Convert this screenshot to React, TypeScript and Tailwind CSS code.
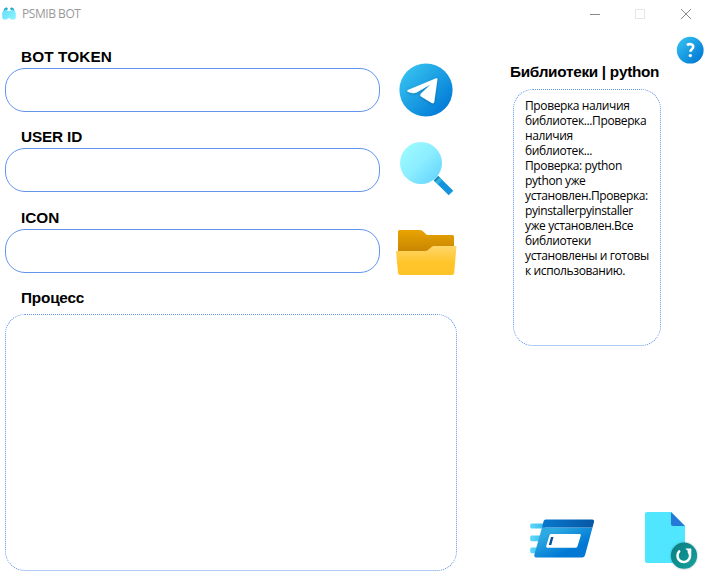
import type { ReactNode } from "react";

function Label({ children, className = "" }: { children: ReactNode; className?: string }) {
  return <div className={`h-[17px] pl-4 text-[15.33px] leading-[17px] font-bold whitespace-nowrap text-black ${className}`}>{children}</div>;
}

function AppLogo() {
  return (
    <svg width="14" height="13" viewBox="0 0 14 13">
      <defs>
        <linearGradient id="logo" x1="0" y1="0" x2="1" y2="1">
          <stop stopColor="#62dcf8" />
          <stop offset="1" stopColor="#8df4ff" />
        </linearGradient>
      </defs>
      <path d="M2.6 1.2 5 3.4 7 4.2l2-.8 2.4-2.2L13.8 6v4.8l-1 1.7H9L8 11.2H6L5 12.5H1.2L.2 10.8V6Z" fill="url(#logo)" />
      <path d="M1.4 4 2.6 1.2 4.6.2 6 1.8 4.8 3.2 3.4 2.6ZM12.6 4l-1.2-2.8-2-1L8 1.8l1.2 1.4 1.4-.6Z" fill="#2aa7c9" />
    </svg>
  );
}

function HelpIcon() {
  return (
    <svg width="28" height="28" viewBox="0 0 28 28">
      <defs>
        <linearGradient id="help" x1="0" y1="0" x2="1" y2="1">
          <stop offset=".1" stopColor="#33bef0" />
          <stop offset=".9" stopColor="#0078d4" />
        </linearGradient>
      </defs>
      <circle cx="14.2" cy="14.2" r="13.4" fill="url(#help)" />
      <path d="M11 9.2c2-1.7 6.2-1.5 6.2 1.5 0 2.6-2.8 2.4-2.8 5.1" fill="none" stroke="white" strokeWidth="2.6" />
      <circle cx="14.3" cy="19.6" r="1.7" fill="white" />
    </svg>
  );
}

function TelegramIcon() {
  return (
    <svg width="54" height="54" viewBox="0 0 54 54">
      <defs>
        <linearGradient id="telegram" x1="0" y1="0" x2="1" y2="1">
          <stop offset=".1" stopColor="#36c2ef" />
          <stop offset=".9" stopColor="#0078d7" />
        </linearGradient>
        <filter id="planeShadow" x="-20%" y="-20%" width="140%" height="140%">
          <feDropShadow dx="0" dy=".7" stdDeviation=".8" floodOpacity=".3" />
        </filter>
      </defs>
      <circle cx="27" cy="27" r="26.6" fill="url(#telegram)" />
      <path d="M8.8 27.1 37.1 15.3q1.5-.5 1.3 1.2L35.3 38.7q-.4 2.5-2.6 1.2L22 33.5q-1.6-1.2-.2-2.8L31.5 21.4 17.2 29.8Q13 30.8 8.8 28.8q-1.4-.8 0-1.7Z" fill="white" filter="url(#planeShadow)" />
    </svg>
  );
}

function SearchIcon() {
  return (
    <svg width="54" height="54" viewBox="0 0 54 54">
      <defs>
        <linearGradient id="lens" x1=".1" y1=".1" x2=".9" y2=".9">
          <stop stopColor="#9cfbff" />
          <stop offset=".5" stopColor="#8bedff" />
          <stop offset="1" stopColor="#66d6ff" />
        </linearGradient>
      </defs>
      <path d="m33.8 38.4 4.4-4.4 15.1 14.8-4.6 4.4Z" fill="#1494dc" />
      <path d="m33.8 38.4 4.4-4.4 4 4-4.3 4.4Z" fill="#2eb4df" />
      <path d="m33.8 38.4 4.4-4.4 1.4 1.4-4.3 4.4Z" fill="#2189b5" />
      <circle cx="21" cy="21" r="21" fill="url(#lens)" />
    </svg>
  );
}

function FolderIcon() {
  return (
    <svg width="61" height="46" viewBox="0 0 61 46">
      <defs>
        <linearGradient id="folderBack" x1="0" y1="0" x2="0" y2="1">
          <stop stopColor="#e8a401" />
          <stop offset="1" stopColor="#bb7903" />
        </linearGradient>
        <linearGradient id="folderFront" x1="0" y1="0" x2="0" y2="1">
          <stop stopColor="#ffd66b" />
          <stop offset=".55" stopColor="#ffc52b" />
          <stop offset="1" stopColor="#ffc329" />
        </linearGradient>
      </defs>
      <path d="M2 1.5Q2 0 3.5 0h20q2 0 3.3 1.3L31 5h25.5Q58 5 58 6.5V30H2Z" fill="url(#folderBack)" />
      <path d="M0 21h29q2 0 3-1.1L35.5 17q1-1 2.5-1h22.5l-2.3 27q-.2 2-2 2h-52q-2 0-2.2-2Z" fill="url(#folderFront)" />
    </svg>
  );
}

function RunIcon() {
  return (
    <svg width="66" height="40" viewBox="0 0 66 40">
      <defs>
        <linearGradient id="window" x1="0" y1="0" x2="1" y2="1">
          <stop offset=".2" stopColor="#2eaae2" />
          <stop offset=".7" stopColor="#0078d4" />
        </linearGradient>
        <linearGradient id="titleStrip">
          <stop stopColor="#0878ce" />
          <stop offset="1" stopColor="#0757a5" />
        </linearGradient>
        <linearGradient id="trail">
          <stop stopColor="#60dafa" />
          <stop offset="1" stopColor="#36b8ea" />
        </linearGradient>
      </defs>
      <path d="M1 4.4h14v5H1q-1-1-1-2.5t1-2.5ZM1 16.4h12v5.8H1q-1-1-1-2.9t1-2.9ZM1 28.4h11v5.8H1q-1-1-1-2.9t1-2.9Z" fill="url(#trail)" />
      <path d="m12 8.5-7.6 27q-.6 3 1.8 3H52.5q2 0 2.6-2.4L62.5 8.5Z" fill="url(#window)" />
      <path d="M12 8.5 13.6 2q.4-1.5 2-1.5h46.6q2.4 0 1.8 2.5L62.5 8.5Z" fill="url(#titleStrip)" />
      <path d="M19.5 16.2 16.2 27q-.5 1.7 1.3 1.7h28q1.5 0 2-1.5l3.3-10.8q.5-1.5-1.2-1.5H21.3q-1.4 0-1.8 1.3Z" fill="white" />
      <path d="M21 18h2.5L21.3 26H18.8Z" fill="#07519b" />
    </svg>
  );
}

function FileReloadIcon() {
  return (
    <svg width="53" height="58" viewBox="0 0 53 58">
      <defs>
        <linearGradient id="reload" x1="0" y1="0" x2="1" y2="1">
          <stop stopColor="#087b83" />
          <stop offset="1" stopColor="#16a29c" />
        </linearGradient>
        <filter id="badgeShadow" x="-20%" y="-20%" width="140%" height="140%">
          <feDropShadow dx="0" dy="0" stdDeviation=".9" floodOpacity=".3" />
        </filter>
      </defs>
      <path d="M2 0h24l14 14v35q0 2-2 2H2q-2 0-2-2V2Q0 0 2 0Z" fill="#50e6ff" />
      <path d="M26 0v12q0 2 2 2h12Z" fill="#2779d7" />
      <circle cx="39" cy="43.7" r="13.1" fill="url(#reload)" filter="url(#badgeShadow)" />
      <path d="M34.2 39.4a6.3 6.3 0 1 0 9.6.5" fill="none" stroke="white" strokeWidth="2.5" strokeLinecap="round" />
      <path d="M40.3 36.6h6v6Z" fill="white" />
    </svg>
  );
}

function Field({ label, children, gap, tracking }: { label: string; children: ReactNode; gap: string; tracking: string }) {
  return (
    <div className={gap}>
      <Label className={tracking}>{label}</Label>
      <div className="mt-[3px] flex h-11">
        <input aria-label={label} className="h-11 w-[375px] rounded-[20px] border border-[#6495ed] bg-white px-3 text-xs outline-none" />
        {children}
      </div>
    </div>
  );
}

const log = [
  "Проверка наличия",
  "библиотек...Проверка",
  "наличия",
  "библиотек...",
  "Проверка: python",
  "python уже",
  "установлен.Проверка:",
  "pyinstallerpyinstaller",
  "уже установлен.Все",
  "библиотеки",
  "установлены и готовы",
  "к использованию.",
].join("\n");

export default function App() {
  return (
    <div className="h-[581px] w-[708px] overflow-hidden bg-white font-['Liberation_Sans',sans-serif]">
      <header className="flex h-[27px] items-center pl-0.5 font-['Open_Sans',sans-serif] text-xs text-[#999]">
        <AppLogo />
        <span className="ml-1.5 w-[60px] text-[12px] tracking-[-0.45px] whitespace-nowrap">PSMIB BOT</span>
        <svg className="mr-[16px] ml-auto" width="102" height="12" viewBox="0 0 102 12" fill="none">
          <path d="M0 6.5h10" stroke="#888" />
          <path d="M45.5 1.5h9v9h-9Z" stroke="#e5e5e5" />
          <path d="m91 1 10 10m0-10L91 11" stroke="#888" />
        </svg>
      </header>
      <div className="flex h-[554px]">
        <main className="w-[510px] shrink-0 pt-[21px] pl-[5px]">
          <Field label="BOT TOKEN" gap="" tracking="tracking-[0.1px]">
            <button aria-label="Telegram" className="-mt-[5px] ml-[19px] h-[54px]"><TelegramIcon /></button>
          </Field>
          <Field label="USER ID" gap="mt-4" tracking="tracking-[-0.15px]">
            <button aria-label="Search" className="-mt-[6px] ml-5 h-[54px]"><SearchIcon /></button>
          </Field>
          <Field label="ICON" gap="mt-[17px]" tracking="tracking-normal">
            <button aria-label="Open" className="mt-px ml-4 h-[46px]"><FolderIcon /></button>
          </Field>
          <div className="mt-4"><Label className="tracking-[-0.2px]">Процесс</Label></div>
          <div className="mt-2 h-[257px] w-[452px] rounded-[20px] border border-dotted border-[#6495ed]" />
        </main>
        <aside className="flex w-[198px] flex-col">
          <button aria-label="Help" className="mt-[9px] ml-[166px] size-7"><HelpIcon /></button>
          <h2 className="-mt-px h-[17px] text-[15.33px] leading-[17px] font-bold tracking-[-0.29px] whitespace-nowrap">Библиотеки | python</h2>
          <div className="mt-[9px] ml-[3px] h-[257px] w-[148px] rounded-[20px] border border-dotted border-[#6495ed] pt-2 pl-[11px] font-['Open_Sans',sans-serif] text-[12px] leading-[15px] tracking-[-0.38px] text-black">
            <p className="whitespace-pre">{log}</p>
          </div>
          <div className="mt-[166px] flex pl-5">
            <button aria-label="Run" className="mt-[7px] h-10"><RunIcon /></button>
            <button aria-label="Reload file" className="ml-[49px] h-[58px]"><FileReloadIcon /></button>
          </div>
        </aside>
      </div>
    </div>
  );
}
